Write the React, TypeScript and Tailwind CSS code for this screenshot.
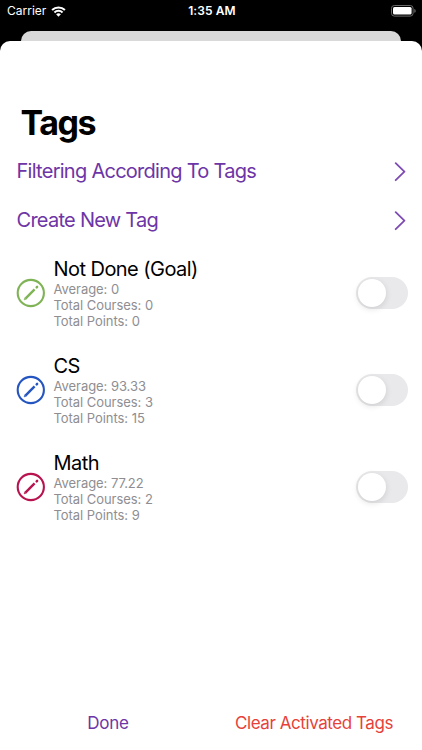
import { useState } from "react";

interface Tag {
  name: string;
  average: string;
  courses: number;
  points: number;
  color: string;
}

const TAGS: Tag[] = [
  { name: "Not Done (Goal)", average: "0", courses: 0, points: 0, color: "text-[#7fb356]" },
  { name: "CS", average: "93.33", courses: 3, points: 15, color: "text-[#2455c0]" },
  { name: "Math", average: "77.22", courses: 2, points: 9, color: "text-[#b8124f]" },
];

const LINKS = ["Filtering According To Tags", "Create New Tag"];

function WifiIcon() {
  return (
    <svg width="15" height="11" viewBox="0 0 16 12" fill="none" stroke="white" strokeWidth="2.2">
      <path d="M1 4.4a10 10 0 0 1 14 0" />
      <path d="M3.6 7.1a6.2 6.2 0 0 1 8.8 0" />
      <path d="M8 11.7 5.4 9.1a3.7 3.7 0 0 1 5.2 0z" fill="white" stroke="none" />
    </svg>
  );
}

function BatteryIcon() {
  return (
    <svg width="26" height="12" viewBox="0 0 26 12" fill="none">
      <rect x="0.5" y="0.5" width="21.6" height="10.6" rx="2.8" stroke="#686868" />
      <rect x="2" y="2" width="18.6" height="7.6" rx="1.5" fill="white" />
      <path d="M23.4 4v3.8c.8-.3 1.2-1 1.2-1.9s-.4-1.6-1.2-1.9z" fill="#777777" />
    </svg>
  );
}

function PencilCircle() {
  return (
    <svg width="30" height="30" viewBox="0 0 30 30" fill="none" stroke="currentColor">
      <circle cx="14.8" cy="15" r="13.1" strokeWidth="2.1" />
      <path d="M9.4 20.6 18.6 11.4" strokeWidth="2.4" />
      <path d="M8 22l.7-2.2 1.5 1.5z" fill="currentColor" strokeWidth="0.4" />
      <path d="M20.7 9.3l.4-.4" strokeWidth="2.5" strokeLinecap="round" />
    </svg>
  );
}

function StatusBar() {
  return (
    <div className="grid grid-cols-3 items-center h-[22px] pl-[7px] pr-[5px] text-white text-[12px]">
      <div className="flex items-center gap-[5px]">
        <span>Carrier</span>
        <WifiIcon />
      </div>
      <span className="text-center font-semibold tracking-[0.1px]">1:35 AM</span>
      <div className="flex justify-end">
        <BatteryIcon />
      </div>
    </div>
  );
}

function Toggle({ label }: { label: string }) {
  const [on, setOn] = useState(false);

  return (
    <button
      role="switch"
      aria-checked={on}
      aria-label={label}
      onClick={() => setOn(!on)}
      className={`flex items-center w-[52px] h-8 p-[2px] rounded-full ${on ? "justify-end bg-[#34c759]" : "bg-[#e9e9eb]"}`}
    >
      <span className="size-[28px] rounded-full bg-white shadow-[0_2px_6px_rgba(0,0,0,0.12)]" />
    </button>
  );
}

function TagRow({ tag }: { tag: Tag }) {
  return (
    <li className="flex items-center h-[96.7px] pl-4 pr-[14.5px]">
      <span className={tag.color}>
        <PencilCircle />
      </span>
      <div className="flex-1 ml-[7.5px]">
        <h2 className="text-[20px] leading-6 tracking-[-0.55px] text-black">{tag.name}</h2>
        <div className="text-[13px] leading-4 tracking-[-0.05px] text-[#8e8e92]">
          <p>Average: {tag.average}</p>
          <p>Total Courses: {tag.courses}</p>
          <p>Total Points: {tag.points}</p>
        </div>
      </div>
      <Toggle label={tag.name} />
    </li>
  );
}

export default function App() {
  return (
    <div className="flex flex-col w-full h-[750px] overflow-hidden bg-black font-['Inter',sans-serif]">
      <StatusBar />
      <div className="h-[10px] mt-[9px] mx-[21px] rounded-t-[10px] bg-[#d9d9da]" />
      <main className="flex flex-col flex-1 rounded-t-[10px] bg-white">
        <h1 className="mt-[62px] ml-[20.5px] text-[34px] leading-10 font-bold tracking-[-1.5px] text-black">Tags</h1>
        <nav className="mt-[4px]">
          {LINKS.map((link) => (
            <button key={link} className="flex items-center justify-between w-full h-[49px] pl-[16.5px] pr-[15px] text-[20px] tracking-[-0.73px] text-[#6d35a6]">
              <span className="pb-px">{link}</span>
              <svg className="text-[#7d4bb2]" width="13" height="20" viewBox="0 0 13 20" fill="none" stroke="currentColor" strokeWidth="1.8" strokeLinecap="round" strokeLinejoin="round">
                <path d="M1.7 1.2 10.4 9.7 1.7 18.2" />
              </svg>
            </button>
          ))}
        </nav>
        <ul>
          {TAGS.map((tag) => (
            <TagRow key={tag.name} tag={tag} />
          ))}
        </ul>
        <footer className="flex items-center mt-auto h-[53px] text-[17px]">
          <button className="w-[216px] text-center tracking-[-0.2px] text-[#6d35a6]">Done</button>
          <button className="flex-1 pr-[10px] text-center tracking-[-0.43px] text-[#e6423a]">Clear Activated Tags</button>
        </footer>
      </main>
    </div>
  );
}
